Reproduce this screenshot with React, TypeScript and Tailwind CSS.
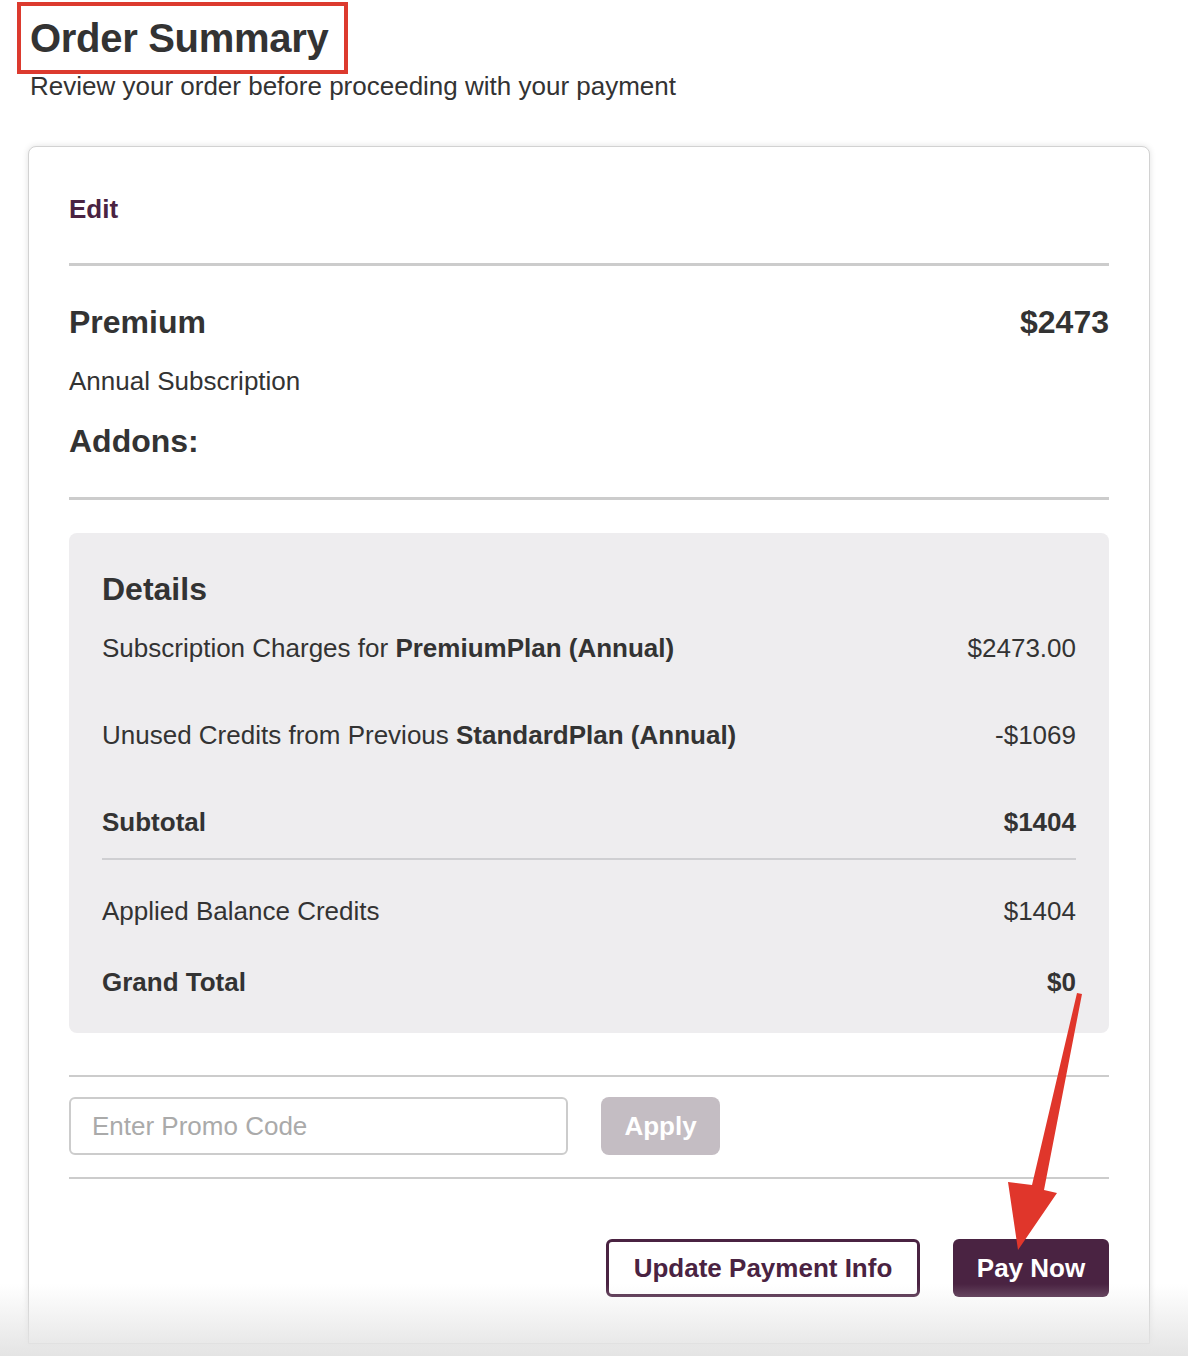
import React from "react";

const purple = "#4a2342";

function Row({ label, value, bold }: { label: React.ReactNode; value: string; bold?: boolean }) {
  return (
    <div className={`flex h-[30px] items-center justify-between text-[26px] leading-[30px] ${bold ? "font-bold" : ""}`}>
      <span>{label}</span>
      <span>{value}</span>
    </div>
  );
}

export default function App() {
  return (
    <div
      className="relative h-[1356px] w-[1188px] overflow-hidden bg-white text-[#333333]"
      style={{ fontFamily: '"Liberation Sans", Arial, sans-serif' }}
    >
      {/* header */}
      <div className="pl-[30px] pt-[14px]">
        <h1 className="text-[40px] font-bold leading-[48px] tracking-[-0.3px]">Order Summary</h1>
        <p className="mt-[9px] text-[26px] leading-[30px]">Review your order before proceeding with your payment</p>
      </div>

      {/* card */}
      <div className="ml-[28px] mt-[45px] w-[1122px] rounded-t-lg border border-[#d2d2d2] bg-white px-10 pb-[46px] pt-[47px] shadow-[0_0_6px_rgba(0,0,0,0.12)]">
        <a className="block text-[26px] font-bold leading-[30px]" style={{ color: purple }}>
          Edit
        </a>
        <div className="mt-[39px] h-[3px] bg-[#cccccc]" />

        <div className="mt-[37px] flex h-[38px] items-center justify-between text-[32px] font-bold leading-[38px]">
          <span>Premium</span>
          <span>$2473</span>
        </div>
        <p className="mt-[25px] text-[26px] leading-[30px]">Annual Subscription</p>
        <h3 className="mt-[26px] text-[32px] font-bold leading-[38px]">Addons:</h3>
        <div className="mt-[37px] h-[3px] bg-[#cccccc]" />

        {/* details */}
        <div className="mt-[33px] rounded-lg bg-[#eeedef] px-[33px] pb-[36px] pt-[37px]">
          <h3 className="text-[32px] font-bold leading-[38px]">Details</h3>
          <div className="mt-[25px]">
            <Row
              label={
                <>
                  Subscription Charges for <b>PremiumPlan (Annual)</b>
                </>
              }
              value="$2473.00"
            />
          </div>
          <div className="mt-[57px]">
            <Row
              label={
                <>
                  Unused Credits from Previous <b>StandardPlan (Annual)</b>
                </>
              }
              value="-$1069"
            />
          </div>
          <div className="mt-[57px]">
            <Row label="Subtotal" value="$1404" bold />
          </div>
          <div className="mt-[21px] h-[2px] bg-[#cfcfd2]" />
          <div className="mt-[36px]">
            <Row label="Applied Balance Credits" value="$1404" />
          </div>
          <div className="mt-[41px]">
            <Row label="Grand Total" value="$0" bold />
          </div>
        </div>

        <div className="mt-[42px] h-[2px] bg-[#cccccc]" />
        <div className="mt-[20px] flex items-center gap-[33px]">
          <input
            placeholder="Enter Promo Code"
            className="h-[58px] w-[499px] rounded-md border-2 border-[#cccccc] px-[21px] text-[26px] text-[#333] outline-none placeholder:text-[#aaaaaa]"
          />
          <button className="h-[58px] w-[119px] rounded-lg bg-[#c4bdc3] text-[26px] font-bold text-white">Apply</button>
        </div>
        <div className="mt-[22px] h-[2px] bg-[#cccccc]" />

        <div className="mt-[60px] flex justify-end gap-[33px]">
          <button
            className="h-[58px] w-[314px] rounded-md border-[3px] bg-white text-[26px] font-bold"
            style={{ borderColor: purple, color: purple }}
          >
            Update Payment Info
          </button>
          <button className="h-[58px] w-[156px] rounded-md text-[26px] font-bold text-white" style={{ backgroundColor: purple }}>
            Pay Now
          </button>
        </div>
      </div>

      {/* annotations */}
      <div className="pointer-events-none absolute left-[17px] top-[2px] h-[72px] w-[331px] border-4 border-[#dc3a2e]" />
      <svg className="pointer-events-none absolute left-0 top-0" width="1188" height="1356" viewBox="0 0 1188 1356">
        <polygon
          points="1077,993 1082,994 1044,1190 1057,1193 1018,1250 1008,1182 1032,1185"
          fill="#e0362b"
        />
      </svg>

      {/* bottom fade */}
      <div className="pointer-events-none absolute bottom-0 left-0 h-[72px] w-full bg-linear-to-b from-white/0 to-[#e4e4e4]" />
    </div>
  );
}
